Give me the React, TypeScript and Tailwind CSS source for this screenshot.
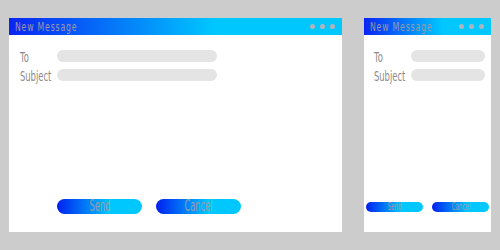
import React from "react";

const font = {
  fontFamily: "'DejaVu Sans', sans-serif",
};

function Dots() {
  return (
    <div className="flex items-center gap-[5px]">
      <span className="w-[5px] h-[5px] rounded-full bg-[#aeb4bc]" />
      <span className="w-[5px] h-[5px] rounded-full bg-[#aeb4bc]" />
      <span className="w-[5px] h-[5px] rounded-full bg-[#aeb4bc]" />
    </div>
  );
}

function TitleBar() {
  return (
    <div className="h-[17px] flex items-center pl-[6px] pr-[7px] bg-[linear-gradient(to_right,#0a24f2_0%,#00c8ff_62%,#00c8ff_100%)]">
      <div className="w-[60px] flex-none mb-[3px]">
        <span
          className="inline-block whitespace-nowrap origin-left scale-x-[0.6] text-[13px] leading-none tracking-[1.3px] text-[#9a9aa8]"
          style={font}
        >
          New Message
        </span>
      </div>
      <div className="ml-auto">
        <Dots />
      </div>
    </div>
  );
}

function Field({ label, inputW, lw }: { label: string; inputW: string; lw: string }) {
  return (
    <div className="flex items-center h-[12px]">
      <div className={`${lw} flex-none`}>
        <span
          className="inline-block whitespace-nowrap origin-left scale-x-[0.62] text-[13.5px] leading-none text-[#8a8a8a]"
          style={font}
        >
          {label}
        </span>
      </div>
      <div className={`h-[12px] rounded-full bg-[#e4e4e4] ${inputW}`} />
    </div>
  );
}

function Btn({ label, cls, text }: { label: string; cls: string; text: string }) {
  return (
    <div
      className={`flex items-center justify-center rounded-full bg-[linear-gradient(to_right,#0020f0_0%,#00c8ff_62%,#00c8ff_100%)] ${cls}`}
    >
      <span
        className={`inline-block whitespace-nowrap scale-x-[0.55] leading-none text-[#9a9aa8] ${text}`}
        style={font}
      >
        {label}
      </span>
    </div>
  );
}

export default function App() {
  return (
    <div className="w-[500px] h-[250px] bg-[#cccccc] flex gap-[22px] pl-[9px] pt-[18px]">
      <div className="w-[333px] h-[214px] bg-white flex flex-col">
        <TitleBar />
        <div className="flex flex-col gap-[7px] pl-[11px] pt-[15px]">
          <Field label="To" lw="w-[37px]" inputW="w-[160px]" />
          <Field label="Subject" lw="w-[37px]" inputW="w-[160px]" />
        </div>
        <div className="mt-auto mb-[18px] ml-[48px] flex gap-[14px]">
          <Btn label="Send" cls="w-[85px] h-[15px]" text="text-[15px]" />
          <Btn label="Cancel" cls="w-[85px] h-[15px]" text="text-[15px]" />
        </div>
      </div>
      <div className="w-[127px] h-[214px] bg-white flex flex-col">
        <TitleBar />
        <div className="flex flex-col gap-[7px] pl-[10px] pt-[15px]">
          <Field label="To" lw="w-[37px]" inputW="w-[74px]" />
          <Field label="Subject" lw="w-[37px]" inputW="w-[74px]" />
        </div>
        <div className="mt-auto mb-[20px] ml-[2px] flex gap-[9px]">
          <Btn label="Send" cls="w-[57px] h-[10px]" text="text-[10px]" />
          <Btn label="Cancel" cls="w-[57px] h-[10px]" text="text-[10px]" />
        </div>
      </div>
    </div>
  );
}
